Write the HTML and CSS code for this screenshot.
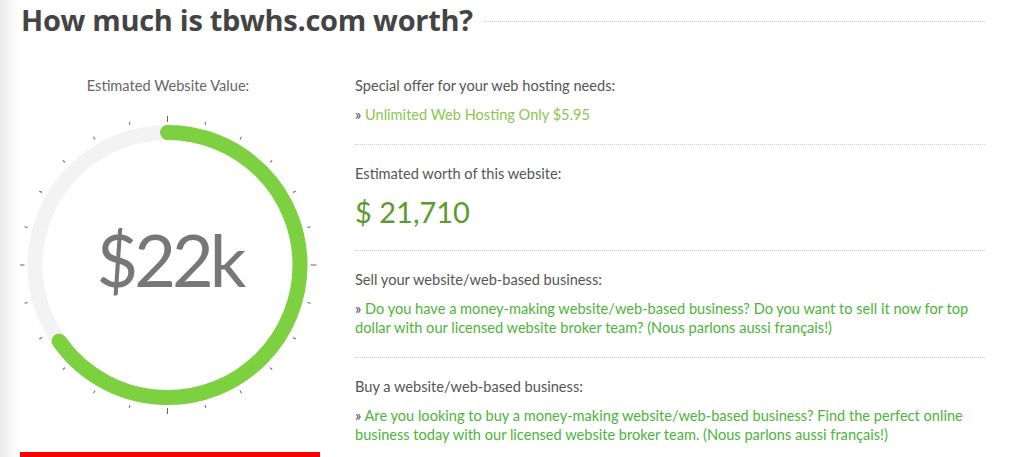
FILE: index.html
```html
<!DOCTYPE html>
<html lang="en">
<head>
    <meta charset="UTF-8">
    <meta name="viewport" content="width=device-width, initial-scale=1.0">
    <title>How much is tbwhs.com worth?</title>
    <link rel="stylesheet" href="styles.css">
</head>
<body>
    <div class="page">
        <div class="header">
            <h1>How much is tbwhs.com worth?</h1>
            <div class="rule"></div>
        </div>

        <div class="main">
            <div class="left-col">
                <p class="gauge-label">Estimated Website Value:</p>
                <svg class="gauge" width="300" height="300" viewBox="-147.5 -150 300 300">
                    <defs>
                        <line id="major" x1="0" y1="-143" x2="0" y2="-149" />
                        <line id="minor" x1="0" y1="-145" x2="0" y2="-148" />
                    </defs>
                    <circle class="track" r="132.5" />
                    <circle class="value" r="132.5" transform="rotate(-90)" stroke-dasharray="543 900" />
                    <g class="ticks">
                        <use href="#major" />
                        <use href="#minor" transform="rotate(15)" />
                        <use href="#minor" transform="rotate(30)" />
                        <use href="#minor" transform="rotate(45)" />
                        <use href="#minor" transform="rotate(60)" />
                        <use href="#minor" transform="rotate(75)" />
                        <use href="#major" transform="rotate(90)" />
                        <use href="#minor" transform="rotate(105)" />
                        <use href="#minor" transform="rotate(120)" />
                        <use href="#minor" transform="rotate(135)" />
                        <use href="#minor" transform="rotate(150)" />
                        <use href="#minor" transform="rotate(165)" />
                        <use href="#major" transform="rotate(180)" />
                        <use href="#minor" transform="rotate(195)" />
                        <use href="#minor" transform="rotate(210)" />
                        <use href="#minor" transform="rotate(225)" />
                        <use href="#minor" transform="rotate(240)" />
                        <use href="#minor" transform="rotate(255)" />
                        <use href="#major" transform="rotate(270)" />
                        <use href="#minor" transform="rotate(285)" />
                        <use href="#minor" transform="rotate(300)" />
                        <use href="#minor" transform="rotate(315)" />
                        <use href="#minor" transform="rotate(330)" />
                        <use href="#minor" transform="rotate(345)" />
                    </g>
                    <text class="gauge-number" x="2" y="22">$22k</text>
                </svg>
                <div class="red-bar"></div>
            </div>

            <div class="right-col">
                <div class="section">
                    <p class="label">Special offer for your web hosting needs:</p>
                    <p class="offer"><a href="#">Unlimited Web Hosting Only $5.95</a></p>
                </div>
                <div class="section">
                    <p class="label">Estimated worth of this website:</p>
                    <p class="worth">$ 21,710</p>
                </div>
                <div class="section">
                    <p class="label">Sell your website/web-based business:</p>
                    <p class="pitch"><a href="#">Do you have a money-making website/web-based business? Do you want to sell it now for top dollar with our licensed website broker team? (Nous parlons aussi français!)</a></p>
                </div>
                <div class="section last">
                    <p class="label">Buy a website/web-based business:</p>
                    <p class="pitch"><a href="#">Are you looking to buy a money-making website/web-based business? Find the perfect online business today with our licensed website broker team. (Nous parlons aussi français!)</a></p>
                </div>
            </div>
        </div>
    </div>
</body>
</html>
```

FILE: styles.css
```css
body {
    margin: 0;
    font-family: Lato, "Open Sans", sans-serif;
    color: #555;
    background: linear-gradient(to right, #ebebeb 0, #f6f6f6 10px, #fff 20px) no-repeat;
    background-color: #fff;
    overflow: hidden;
}
p { margin: 0; }
a { text-decoration: none; }
.page {
    padding: 2px 26px 0 20px;
}
.header {
    display: flex;
    align-items: center;
    gap: 11px;
}
h1 {
    margin: 0 0 0 1px;
    font-family: "Open Sans", sans-serif;
    font-size: 29px;
    letter-spacing: -0.3px;
    line-height: 36px;
    font-weight: bold;
    color: #444;
}
.rule {
    flex: 1;
    border-top: 1px dotted #ccc;
    margin-top: 2px;
}
.main {
    display: flex;
    margin-top: 19px;
}
.left-col {
    width: 300px;
    padding-top: 19px;
}
.gauge-label {
    text-align: center;
    font-size: 14.6px;
    line-height: 20px;
    color: #666;
    margin-right: 4px;
}
.gauge {
    display: block;
    margin-top: 18.5px;
}
.track {
    fill: none;
    stroke: #f3f3f3;
    stroke-width: 15;
}
.value {
    fill: none;
    stroke: #7dd03f;
    stroke-width: 15;
    stroke-linecap: round;
}
.ticks {
    stroke: #666;
    stroke-width: 1;
}
.gauge-number {
    font-family: Lato, sans-serif;
    font-size: 72px;
    letter-spacing: -4px;
    fill: #777;
    text-anchor: middle;
}
.red-bar {
    height: 12px;
    margin-top: 37.5px;
    background-color: #ff0000;
}
.right-col {
    flex: 1;
    margin-left: 35px;
}
.section {
    padding: 19px 0 20px;
    border-bottom: 1px dotted #ccc;
}
.label {
    font-size: 14.6px;
    line-height: 20px;
    color: #555;
    margin-bottom: 9px;
}
.offer, .pitch {
    font-size: 14.6px;
    line-height: 19px;
    color: #555;
}
.offer a::before, .pitch a::before {
    content: "\00bb\00a0";
    color: #444;
}
.offer a { color: #8cc552; }
.pitch a { color: #4cb43a; }
.worth {
    margin-top: 10px;
    font-size: 29px;
    line-height: 36px;
    color: #5c9a2e;
}
```
